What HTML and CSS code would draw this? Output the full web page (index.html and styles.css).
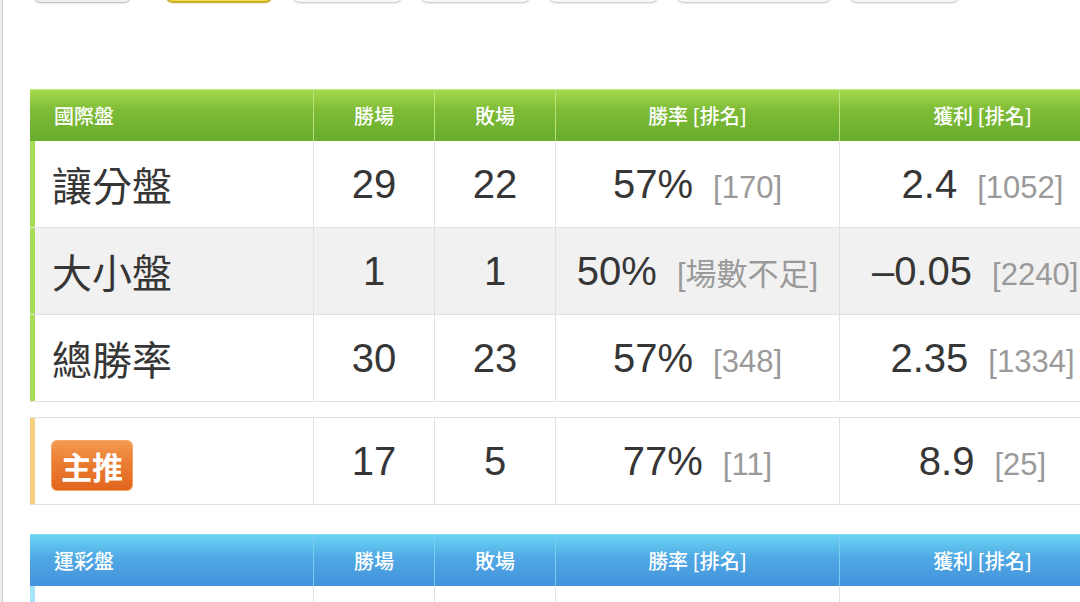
FILE: index.html
```html
<!DOCTYPE html>
<html lang="zh-Hant">
<head>
    <meta charset="UTF-8">
    <meta name="viewport" content="width=device-width, initial-scale=1.0">
    <title>戰績</title>
    <link rel="stylesheet" href="styles.css">
</head>
<body>

    <div class="page">
        <div class="tabs">
            <span class="tab tab-first"></span>
            <span class="tab tab-active"></span>
            <span class="tab"></span>
            <span class="tab"></span>
            <span class="tab"></span>
            <span class="tab tab-wide"></span>
            <span class="tab"></span>
        </div>

        <table class="stats stats-green">
            <colgroup>
                <col class="c-name"><col class="c-num"><col class="c-num"><col class="c-rate"><col class="c-profit">
            </colgroup>
            <thead>
                <tr>
                    <th>國際盤</th>
                    <th>勝場</th>
                    <th>敗場</th>
                    <th>勝率 [排名]</th>
                    <th>獲利 [排名]</th>
                </tr>
            </thead>
            <tbody>
                <tr>
                    <td>讓分盤</td>
                    <td>29</td>
                    <td>22</td>
                    <td>57%<span class="rank">[170]</span></td>
                    <td>2.4<span class="rank">[1052]</span></td>
                </tr>
                <tr class="alt">
                    <td>大小盤</td>
                    <td>1</td>
                    <td>1</td>
                    <td>50%<span class="rank">[場數不足]</span></td>
                    <td class="wide">–0.05<span class="rank">[2240]</span></td>
                </tr>
                <tr>
                    <td>總勝率</td>
                    <td>30</td>
                    <td>23</td>
                    <td>57%<span class="rank">[348]</span></td>
                    <td>2.35<span class="rank">[1334]</span></td>
                </tr>
            </tbody>
        </table>

        <table class="stats stats-pick">
            <colgroup>
                <col class="c-name"><col class="c-num"><col class="c-num"><col class="c-rate"><col class="c-profit">
            </colgroup>
            <tbody>
                <tr>
                    <td><span class="badge">主推</span></td>
                    <td>17</td>
                    <td>5</td>
                    <td>77%<span class="rank">[11]</span></td>
                    <td>8.9<span class="rank">[25]</span></td>
                </tr>
            </tbody>
        </table>

        <table class="stats stats-blue">
            <colgroup>
                <col class="c-name"><col class="c-num"><col class="c-num"><col class="c-rate"><col class="c-profit">
            </colgroup>
            <thead>
                <tr>
                    <th>運彩盤</th>
                    <th>勝場</th>
                    <th>敗場</th>
                    <th>勝率 [排名]</th>
                    <th>獲利 [排名]</th>
                </tr>
            </thead>
            <tbody>
                <tr>
                    <td></td>
                    <td></td>
                    <td></td>
                    <td></td>
                    <td></td>
                </tr>
            </tbody>
        </table>
    </div>

</body>
</html>
```

FILE: styles.css
```css
body {
    margin: 0;
    background: #ececec;
    font-family: 'Liberation Sans', 'Noto Sans CJK TC', sans-serif;
    color: #333;
    overflow: hidden;
}
.page {
    margin-left: 2px;
    border-left: 1px solid #d2d2d2;
    background: #fff;
    padding-left: 27px;
    min-height: 602px;
}

/* tabs, only their bottom edge shows */
.tabs {
    display: flex;
    gap: 17px;
    margin-top: -30px;
    margin-left: 3px;
    height: 33px;
}
.tab {
    box-sizing: border-box;
    width: 111px;
    height: 33px;
    border: 1px solid #d0d0d0;
    border-radius: 8px;
    background: #f7f7f7;
    box-shadow: 0 1px 1px rgba(0, 0, 0, 0.08);
}
.tab-first {
    width: 99px;
    margin-right: 16px;
    background: #f0f0f0;
    border-color: #c4c4c4;
}
.tab-active {
    width: 108px;
    margin-right: 2px;
    background: #f3d84a;
    border-color: #cdb02a;
    border-width: 1px 1px 2px;
}
.tab-wide {
    width: 156px;
}

/* tables */
.stats {
    width: 1095px;
    table-layout: fixed;
    border-collapse: separate;
    border-spacing: 0;
    background: #fff;
}
.c-name { width: 283px; }
.c-num { width: 121px; }
.c-rate { width: 284px; }
.c-profit { width: 286px; }

.stats-green {
    margin-top: 86px;
}
.stats-pick {
    margin-top: 15px;
    border-top: 1px solid #e2e2e2;
}
.stats-blue {
    margin-top: 29px;
}

.stats th {
    height: 51px;
    padding: 0;
    color: #fff;
    font-family: 'Noto Sans CJK TC', sans-serif;
    font-size: 20px;
    font-weight: 500;
    text-align: center;
    border-left: 1px solid #b9e27a;
    border-top: 1px solid #c4ec7c;
}
.stats th:first-child {
    text-align: left;
    padding-left: 24px;
    border-left: none;
}
.stats-green th {
    background: linear-gradient(to bottom, #a6d94c 0%, #7dbb36 40%, #68ae2e 100%);
}
.stats-blue th {
    background: linear-gradient(to bottom, #6bd4f3 0%, #4fa8e4 45%, #4493dc 100%);
    border-left-color: #7ccdf2;
    border-top-color: #8ae0f8;
}

.stats td {
    height: 86px;
    padding: 0;
    font-size: 40px;
    color: #363636;
    text-align: center;
    border-left: 1px solid #e2e2e2;
    border-bottom: 1px solid #e2e2e2;
    white-space: nowrap;
}
.stats td.wide {
    text-align: left;
    padding-left: 32px;
}
.stats td:first-child {
    text-align: left;
    padding-left: 22px;
    border-left: none;
    font-family: 'Noto Sans CJK TC', sans-serif;
    box-shadow: inset 5px 0 0 #a6dc56;
}
.stats-pick td:first-child {
    box-shadow: inset 5px 0 0 #f6d07c;
    padding-left: 21px;
}
.stats-blue td:first-child {
    box-shadow: inset 5px 0 0 #a6e2f8;
}
.stats tr.alt td {
    background: #f1f1f1;
}

.rank {
    margin-left: 20px;
    font-size: 31px;
    color: #9a9a9a;
}

.badge {
    display: inline-block;
    box-sizing: border-box;
    height: 51px;
    padding: 0 9px;
    line-height: 49px;
    font-size: 31px;
    font-weight: bold;
    color: #fff;
    border: 1px solid #f3a868;
    border-radius: 6px;
    background: linear-gradient(to bottom, #f29a50 0%, #ea7a30 50%, #e2661e 100%);
    vertical-align: middle;
}
```
